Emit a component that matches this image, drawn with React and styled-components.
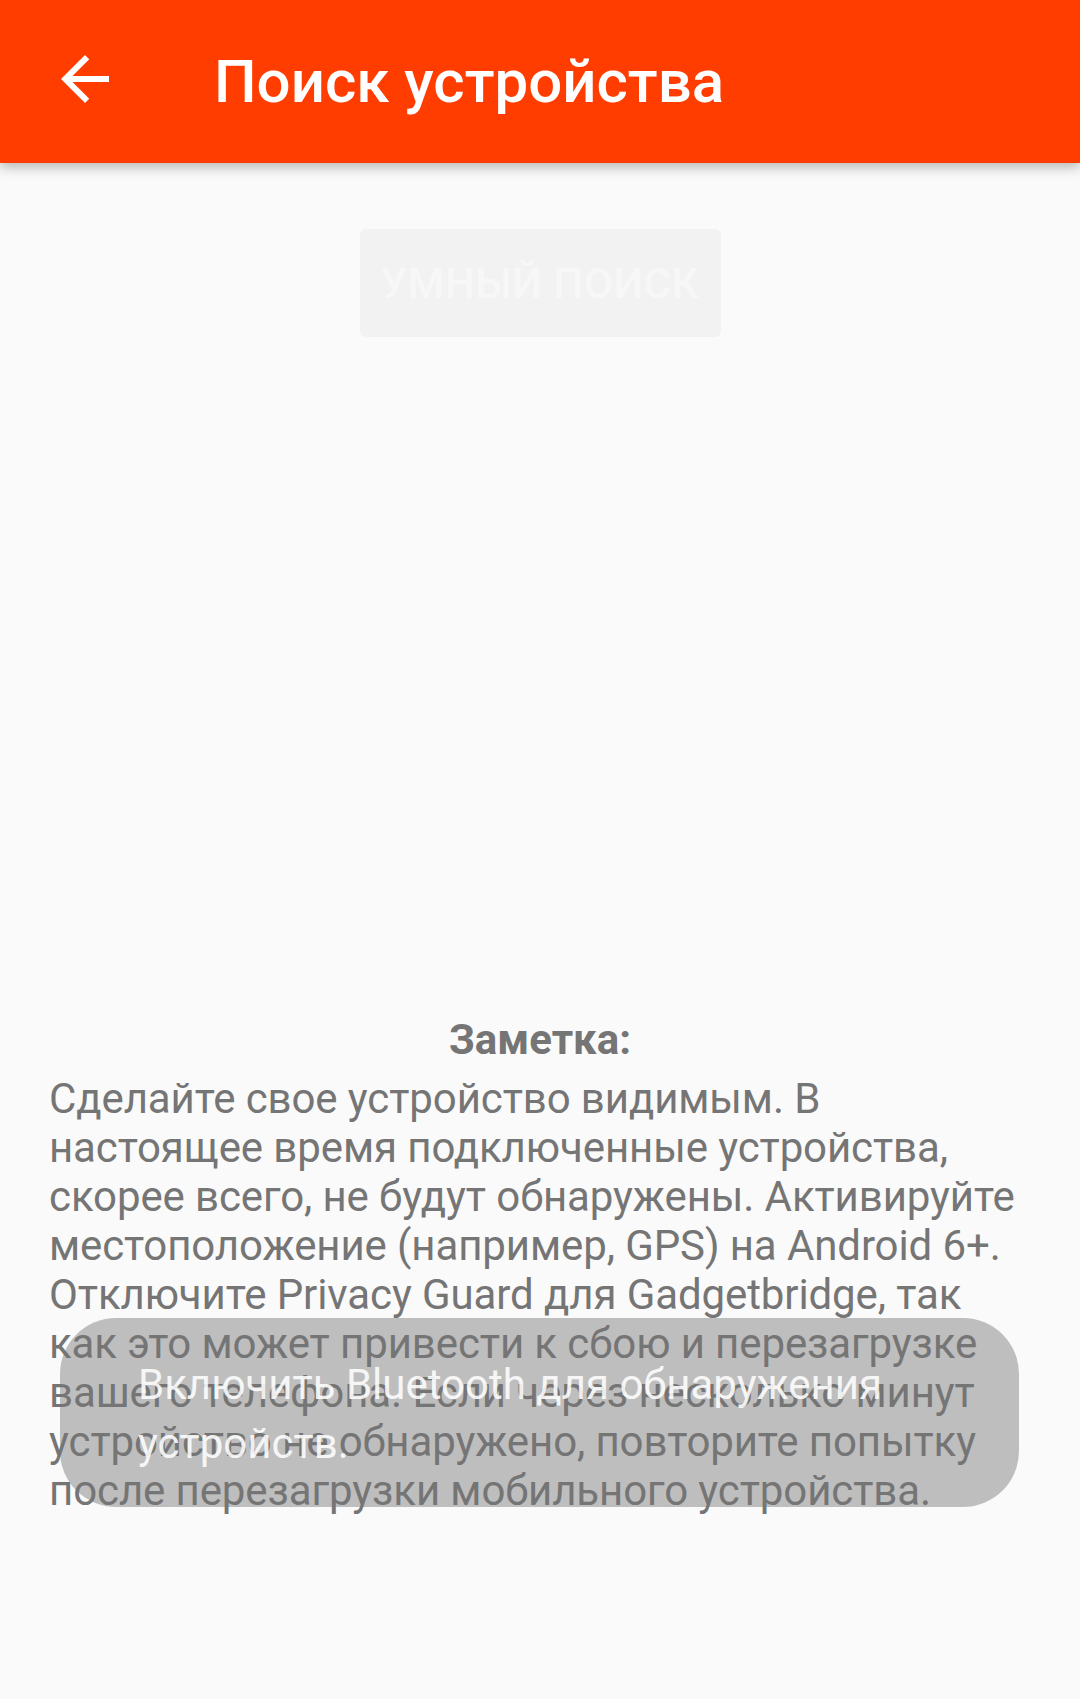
import styled, { createGlobalStyle } from 'styled-components';

const GlobalStyle = createGlobalStyle`
  html, body {
    margin: 0;
    padding: 0;
    background: #fafafa;
  }
  body {
    font-family: Roboto, "Noto Sans", "Liberation Sans", sans-serif;
  }
`;

const Screen = styled.div`
  position: relative;
  min-height: 1699px;
  background: #fafafa;
  overflow: hidden;
`;

const Toolbar = styled.header`
  position: relative;
  z-index: 3;
  display: flex;
  align-items: center;
  height: 163px;
  padding: 0 0 0 49px;
  background: #ff3d00;
  box-shadow: 0 4px 12px rgba(0, 0, 0, 0.28);
  box-sizing: border-box;
`;

const BackButton = styled.button`
  display: flex;
  align-items: center;
  justify-content: center;
  width: 72px;
  height: 72px;
  padding: 0;
  margin: -5px 93px 0 0;
  border: none;
  background: none;
  color: #fff;
`;

const Title = styled.h1`
  margin: 0;
  font-size: 60px;
  font-weight: 500;
  color: #fff;
  letter-spacing: 0;
`;

const Content = styled.main`
  display: flex;
  flex-direction: column;
  align-items: center;
  padding: 66px 49px 0;
`;

const SearchButton = styled.button`
  width: 361px;
  height: 108px;
  border: none;
  border-radius: 6px;
  background: #f2f2f2;
  color: #f7f7f7;
  font-family: Roboto, sans-serif;
  font-size: 42px;
  font-weight: 500;
  letter-spacing: 0.6px;
  text-transform: uppercase;
`;

const Note = styled.section`
  position: relative;
  z-index: 1;
  width: 100%;
  margin-top: 678px;
  color: #757575;
  font-size: 42px;
`;

const NoteTitle = styled.div`
  text-align: center;
  font-weight: 700;
  line-height: 49px;
  margin-bottom: 10px;
`;

const NoteText = styled.p`
  margin: 0;
  line-height: 49px;
  letter-spacing: -0.1px;
`;

const Line = styled.span`
  display: block;
  white-space: nowrap;
`;

const Toast = styled.div`
  position: absolute;
  left: 60px;
  top: 1318px;
  width: 959px;
  height: 189px;
  box-sizing: border-box;
  padding: 37px 60px 0 78px;
  border-radius: 56px;
  background: #bebebe;
`;

const ToastText = styled.div`
  position: relative;
  z-index: 2;
  color: rgba(255, 255, 255, 0.88);
  font-size: 42px;
  line-height: 59px;
`;

const noteLines = [
  'Сделайте свое устройство видимым. В',
  'настоящее время подключенные устройства,',
  'скорее всего, не будут обнаружены. Активируйте',
  'местоположение (например, GPS) на Android 6+.',
  'Отключите Privacy Guard для Gadgetbridge, так',
  'как это может привести к сбою и перезагрузке',
  'вашего телефона. Если через несколько минут',
  'устройство не обнаружено, повторите попытку',
  'после перезагрузки мобильного устройства.',
];

const ArrowBack = () => (
  <svg width="72" height="72" viewBox="0 0 24 24" fill="currentColor">
    <path d="M20 11H7.83l5.59-5.59L12 4l-8 8 8 8 1.41-1.41L7.83 13H20v-2z" />
  </svg>
);

const App = () => {
  return (
    <Screen>
      <GlobalStyle />
      <Toolbar>
        <BackButton aria-label="Назад">
          <ArrowBack />
        </BackButton>
        <Title>Поиск устройства</Title>
      </Toolbar>
      <Content>
        <SearchButton disabled>Умный поиск</SearchButton>
        <Note>
          <NoteTitle>Заметка:</NoteTitle>
          <NoteText>
            {noteLines.map((line) => (
              <Line key={line}>{line}</Line>
            ))}
          </NoteText>
        </Note>
      </Content>
      <Toast>
        <ToastText>
          Включить Bluetooth для обнаружения
          <br />
          устройств.
        </ToastText>
      </Toast>
    </Screen>
  );
};

export default App;
